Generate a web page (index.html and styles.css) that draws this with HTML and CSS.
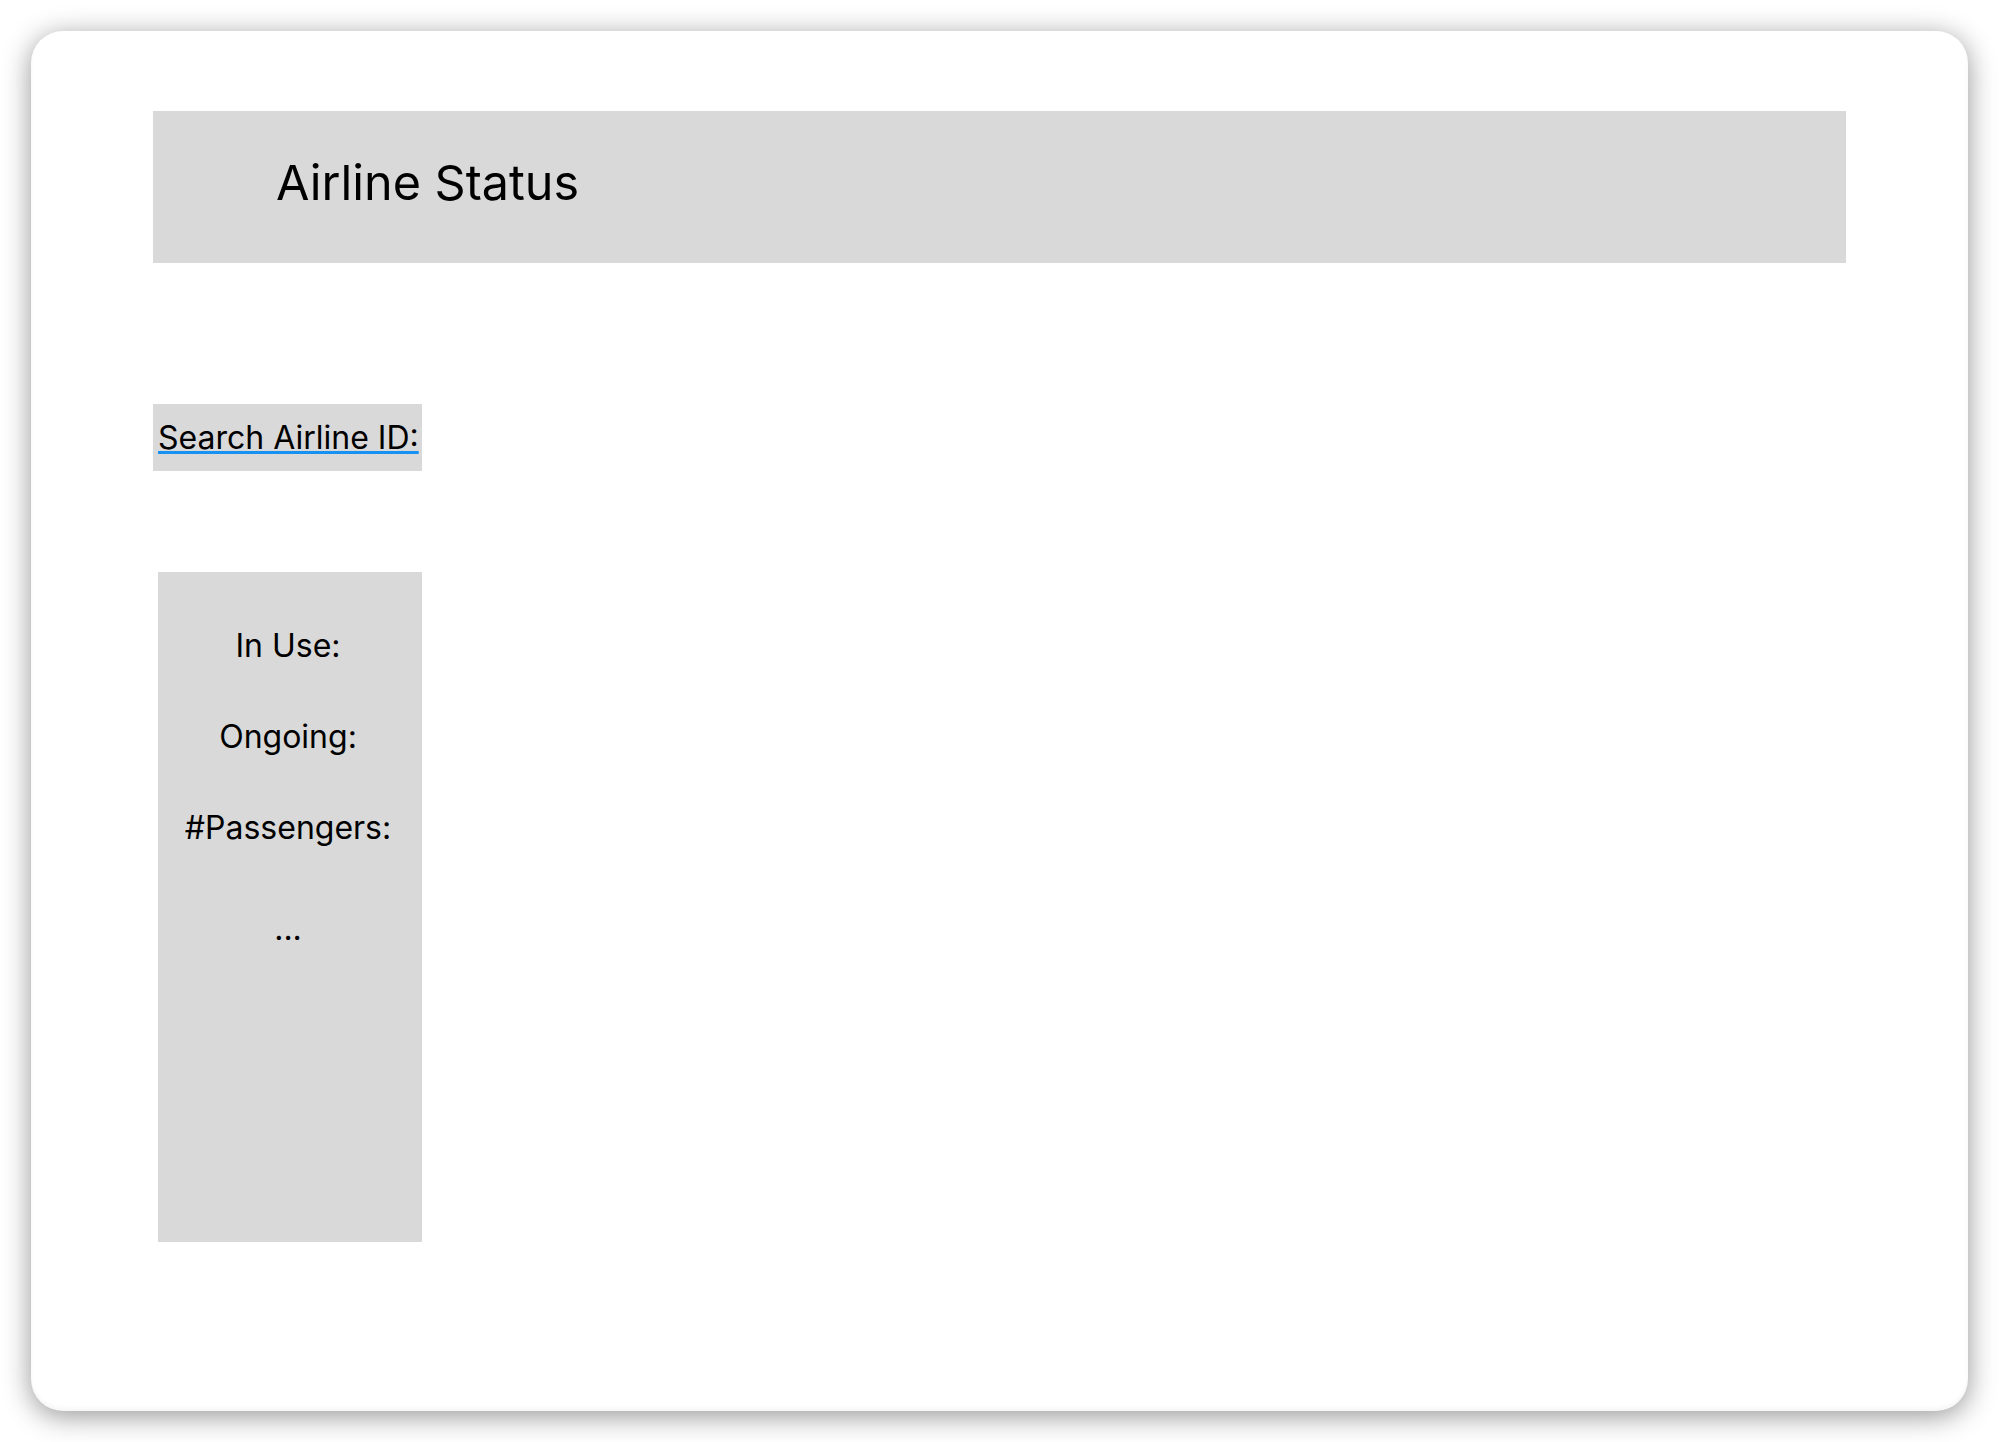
FILE: index.html
```html
<!DOCTYPE html>
<html>
<head>
<meta charset="utf-8">
<link rel="stylesheet" href="styles.css">
</head>
<body>
<div class="card">
  <header class="header">
    <h1 class="title">Airline Status</h1>
  </header>
  <div class="search">
    <span class="search-label">Search Airline ID:</span>
  </div>
  <aside class="panel">
    <p class="stat">In Use:</p>
    <p class="stat">Ongoing:</p>
    <p class="stat">#Passengers:</p>
    <p class="stat more">...</p>
  </aside>
</div>
</body>
</html>
```

FILE: styles.css
```css
html, body {
  margin: 0;
  padding: 0;
  background: #ffffff;
  font-family: "Inter", "Noto Sans", "Liberation Sans", sans-serif;
  color: #000;
}

body {
  padding: 31px 0 31px 31px;
}

.card {
  box-sizing: border-box;
  width: 1937px;
  height: 1380px;
  padding: 80px 122px;
  background: #fff;
  border-radius: 32px;
  box-shadow: 0 5px 28px rgba(0, 0, 0, 0.42), inset 0 -3px 4px rgba(0, 0, 0, 0.04);
}

.header {
  height: 152px;
  background: #d9d9d9;
  display: flex;
  align-items: center;
  padding-left: 123px;
}

.title {
  margin: 0;
  font-weight: 400;
  font-size: 48.5px;
  line-height: 1;
  position: relative;
  top: -4px;
}

.search {
  margin-top: 141px;
  width: 269px;
  height: 67px;
  background: #d9d9d9;
  box-sizing: border-box;
  padding: 16px 0 0 5px;
}

.search-label {
  font-size: 32px;
  line-height: 36px;
  text-decoration: underline;
  text-decoration-color: #1791f2;
  text-decoration-thickness: 3px;
  text-underline-offset: 2px;
}

.panel {
  margin: 101px 0 0 5px;
  width: 264px;
  height: 670px;
  background: #d9d9d9;
  box-sizing: border-box;
  padding: 55px 4px 0 0;
  display: flex;
  flex-direction: column;
  align-items: center;
  gap: 53px;
}

.stat {
  margin: 0;
  font-size: 32px;
  line-height: 38px;
}

.more {
  margin-top: 10px;
}
```
